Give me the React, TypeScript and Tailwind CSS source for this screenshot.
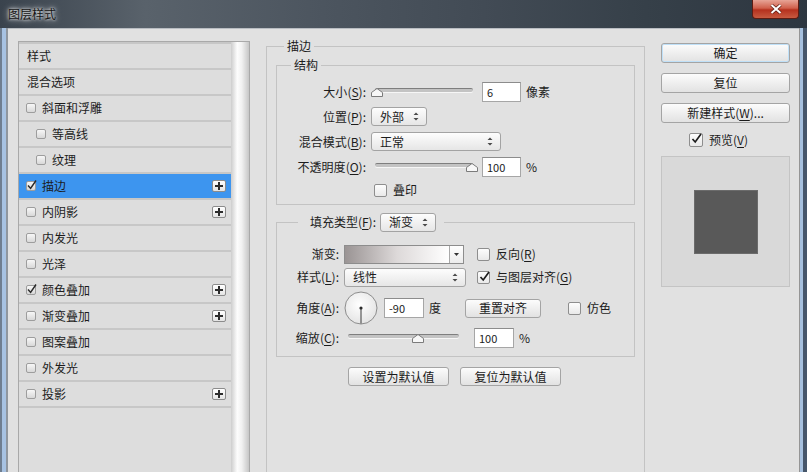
import type { ReactNode } from 'react';

type Item = {
  label: string;
  box?: boolean;
  sub?: boolean;
  checked?: boolean;
  plus?: boolean;
  active?: boolean;
};

const items: Item[] = [
  { label: '样式' },
  { label: '混合选项' },
  { label: '斜面和浮雕', box: true },
  { label: '等高线', box: true, sub: true },
  { label: '纹理', box: true, sub: true },
  { label: '描边', box: true, checked: true, plus: true, active: true },
  { label: '内阴影', box: true, plus: true },
  { label: '内发光', box: true },
  { label: '光泽', box: true },
  { label: '颜色叠加', box: true, checked: true, plus: true },
  { label: '渐变叠加', box: true, plus: true },
  { label: '图案叠加', box: true },
  { label: '外发光', box: true },
  { label: '投影', box: true, plus: true },
];

// label like 大小(S): with the access key underlined
function Key({ text, k, colon = true }: { text: string; k: string; colon?: boolean }) {
  return (
    <>
      {text}(<span className="underline underline-offset-[2px]">{k}</span>){colon ? ':' : ''}
    </>
  );
}

function Tick({ className }: { className: string }) {
  return (
    <svg className={className} width="13" height="13" viewBox="0 0 13 13">
      <path d="M2.5 7 L5.2 10 L11 2" fill="none" stroke="#1e1e1e" strokeWidth="1.7" />
    </svg>
  );
}

function CheckBox({ checked = false }: { checked?: boolean }) {
  return (
    <span className="relative block h-[13px] w-[13px] shrink-0 rounded-[2px] border border-[#8e8e8e] bg-gradient-to-b from-[#fdfdfd] to-[#e9e9e9]">
      {checked && <Tick className="absolute -top-[2px] left-0" />}
    </span>
  );
}

function SmallBox({ checked = false }: { checked?: boolean }) {
  return (
    <span className="relative block h-[10px] w-[10px] shrink-0 rounded-[2px] border border-[#9d9d9d] bg-gradient-to-b from-[#f7f7f7] to-[#d8d8d8]">
      {checked && (
        <svg className="absolute -top-[3px] -left-[1px]" width="12" height="12" viewBox="0 0 12 12">
          <path d="M2 6.5 L4.6 9.4 L10 1.5" fill="none" stroke="#2a2a2a" strokeWidth="1.5" />
        </svg>
      )}
    </span>
  );
}

function Arrows() {
  return (
    <svg width="6" height="9" viewBox="0 0 6 9">
      <path d="M3 0.5 L5.5 3 H0.5 Z M0.5 6 H5.5 L3 8.5 Z" fill="#4a4a4a" />
    </svg>
  );
}

function Select({ value, className }: { value: string; className: string }) {
  return (
    <div
      className={`flex h-[19px] items-center justify-between rounded-[3px] border border-[#a3a3a3] bg-gradient-to-b from-[#fdfdfd] to-[#e6e6e6] pl-[8px] pr-[7px] ${className}`}
    >
      <span>{value}</span>
      <Arrows />
    </div>
  );
}

function Field({ value, className }: { value: string; className: string }) {
  return (
    <div
      className={`flex h-[20px] items-center border border-[#a6a6a6] border-t-[#8c8c8c] bg-white pl-[4px] text-[11px] ${className}`}
    >
      {value}
    </div>
  );
}

function Button({ children, className }: { children: ReactNode; className: string }) {
  return (
    <div
      className={`flex items-center justify-center rounded-[3px] border border-[#a4a4a4] bg-gradient-to-b from-[#fcfcfc] to-[#e2e2e2] text-[#1a1a1a] ${className}`}
    >
      {children}
    </div>
  );
}

function Slider({ pos, className }: { pos: number; className: string }) {
  return (
    <div className={`relative h-[12px] ${className}`}>
      <div className="absolute left-[4px] right-[4px] top-[1px] h-[4px] rounded-full border-t border-[#7e7e7e] bg-[#c3c3c3] shadow-[0_1px_0_#f6f6f6]" />
      <svg
        className="absolute top-[1px]"
        style={{ left: `calc(${pos}% - 6px)` }}
        width="12"
        height="9"
        viewBox="0 0 12 9"
      >
        <path d="M6 0.5 L11.5 4.5 V8.5 H0.5 V4.5 Z" fill="#f7f7f7" stroke="#7b7b7b" />
      </svg>
    </div>
  );
}

function LayerList() {
  return (
    <div className="mt-[3px] flex h-[440px] w-[232px] shrink-0 border border-[#a9a9a9] bg-[#dddddd]">
      <div className="w-[212px] border-t-2 border-[#c7c7c7]">
        {items.map((it) => (
          <div
            key={it.label}
            className={`flex h-[26px] items-center border-b-2 border-[#c7c7c7] ${it.active ? 'bg-[#3d95ef]' : ''} ${it.box ? (it.sub ? 'pl-[17px]' : 'pl-[7px]') : 'pl-[8px]'}`}
          >
            {it.box && <SmallBox checked={it.checked} />}
            <span className={it.box ? 'ml-[6px]' : ''}>{it.label}</span>
            {it.plus && (
              <span className="ml-auto mr-[5px] flex h-[12px] w-[14px] items-center justify-center rounded-[2px] border border-[#8c8c8c] bg-gradient-to-b from-white to-[#e4e4e4]">
                <svg width="8" height="8" viewBox="0 0 8 8">
                  <path d="M4 0 V8 M0 4 H8" stroke="#2c2c2c" strokeWidth="2" />
                </svg>
              </span>
            )}
          </div>
        ))}
      </div>
      <div className="w-[18px] bg-[linear-gradient(to_right,#cdcdcd,#fdfdfd_35%,#f1f1f1_60%,#c6c6c6)]" />
    </div>
  );
}

function StrokePanel() {
  return (
    <fieldset className="ml-[16px] h-[440px] w-[379px] shrink-0 border border-[#c3c3c3]">
      <legend className="ml-[17px] px-[3px] leading-[16px]">描边</legend>
      <div className="px-[9px] pt-[3px]">
        {/* 结构 */}
        <fieldset className="border border-[#c3c3c3]">
          <legend className="ml-[14px] px-[3px] leading-[16px]">结构</legend>
          <div className="pb-[3px] pt-[6px]">
            <div className="flex h-[25px] items-center">
              <span className="w-[89px] text-right">
                <Key text="大小" k="S" />
              </span>
              <Slider pos={6} className="ml-[5px] mt-[3px] w-[106px]" />
              <Field value="6" className="ml-[5px] w-[39px]" />
              <span className="ml-[5px]">像素</span>
            </div>
            <div className="flex h-[25px] items-center">
              <span className="w-[89px] text-right">
                <Key text="位置" k="P" />
              </span>
              <Select value="外部" className="ml-[5px] w-[56px]" />
            </div>
            <div className="flex h-[25px] items-center">
              <span className="w-[89px] text-right">
                <Key text="混合模式" k="B" />
              </span>
              <Select value="正常" className="ml-[5px] w-[130px]" />
            </div>
            <div className="flex h-[25px] items-center">
              <span className="w-[89px] text-right">
                <Key text="不透明度" k="O" />
              </span>
              <Slider pos={95} className="ml-[5px] mt-[3px] w-[106px]" />
              <Field value="100" className="ml-[5px] w-[39px]" />
              <span className="ml-[5px]">%</span>
            </div>
            <div className="flex h-[22px] items-center pl-[97px]">
              <CheckBox />
              <span className="ml-[6px]">叠印</span>
            </div>
          </div>
        </fieldset>

        {/* 填充类型 */}
        <fieldset className="mt-[7px] border border-[#c3c3c3]">
          <legend className="ml-[21px] flex h-[20px] items-center gap-[4px] px-[8px]">
            <span className="w-[70px] text-right">
              <Key text="填充类型" k="F" />
            </span>
            <Select value="渐变" className="w-[56px]" />
          </legend>
          <div className="pb-[8px] pt-[12px]">
            <div className="flex h-[20px] items-center">
              <span className="w-[62px] text-right">渐变:</span>
              <div className="ml-[5px] flex h-[19px] w-[120px] border border-[#8d8d8d]">
                <div className="flex-1 bg-gradient-to-r from-[#9a9494] via-[#ddd9d9] to-white" />
                <div className="flex w-[14px] items-center justify-center border-l border-[#a9a9a9] bg-gradient-to-b from-white to-[#ececec]">
                  <svg width="5" height="3" viewBox="0 0 5 3">
                    <path d="M0 0 H5 L2.5 3 Z" fill="#333" />
                  </svg>
                </div>
              </div>
              <span className="ml-[13px]">
                <CheckBox />
              </span>
              <span className="ml-[6px]">
                <Key text="反向" k="R" colon={false} />
              </span>
            </div>
            <div className="mt-[3px] flex h-[20px] items-center">
              <span className="w-[62px] text-right">
                <Key text="样式" k="L" />
              </span>
              <Select value="线性" className="ml-[5px] w-[122px]" />
              <span className="ml-[11px]">
                <CheckBox checked />
              </span>
              <span className="ml-[6px]">
                与图层对齐(<span className="underline underline-offset-[2px]">G</span>)
              </span>
            </div>
            <div className="mt-[4px] flex h-[34px] items-center">
              <span className="w-[62px] text-right">
                <Key text="角度" k="A" />
              </span>
              <svg className="ml-[5px]" width="34" height="34" viewBox="0 0 34 34">
                <defs>
                  <radialGradient id="dial" cx="45%" cy="40%" r="65%">
                    <stop offset="0" stopColor="#ffffff" />
                    <stop offset="1" stopColor="#e2e2e2" />
                  </radialGradient>
                </defs>
                <circle cx="17" cy="17" r="16" fill="url(#dial)" stroke="#8d8d8d" />
                <line x1="17" y1="17" x2="17" y2="32.5" stroke="#3a3a3a" strokeWidth="1" />
                <circle cx="17" cy="17" r="1.6" fill="#2a2a2a" />
              </svg>
              <Field value="-90" className="ml-[6px] w-[40px]" />
              <span className="ml-[5px]">度</span>
              <Button className="ml-[24px] h-[19px] w-[76px]">重置对齐</Button>
              <span className="ml-[27px]">
                <CheckBox />
              </span>
              <span className="ml-[6px]">仿色</span>
            </div>
            <div className="mt-[3px] flex h-[20px] items-center">
              <span className="w-[62px] text-right">
                <Key text="缩放" k="C" />
              </span>
              <Slider pos={62} className="ml-[5px] mt-[1px] w-[119px]" />
              <Field value="100" className="ml-[11px] w-[40px]" />
              <span className="ml-[5px]">%</span>
            </div>
          </div>
        </fieldset>

        <div className="mt-[10px] flex gap-[11px] pl-[72px]">
          <Button className="h-[19px] w-[101px]">设置为默认值</Button>
          <Button className="h-[19px] w-[101px]">复位为默认值</Button>
        </div>
      </div>
    </fieldset>
  );
}

function RightColumn() {
  return (
    <div className="ml-[16px] mt-[5px] flex w-[129px] shrink-0 flex-col">
      <Button className="h-[20px] border-[#6f93b9] shadow-[inset_0_0_0_1px_#bfe0f8]">确定</Button>
      <Button className="mt-[10px] h-[20px]">复位</Button>
      <Button className="mt-[10px] h-[20px]">
        新建样式(<span className="underline underline-offset-[2px]">W</span>)...
      </Button>
      <div className="mt-[8px] flex h-[18px] items-center pl-[28px]">
        <span className="relative block h-[14px] w-[14px] rounded-[2px] border border-[#8e8e8e] bg-gradient-to-b from-[#fdfdfd] to-[#e9e9e9]">
          <Tick className="absolute -top-[2px] left-0" />
        </span>
        <span className="ml-[6px]">
          <Key text="预览" k="V" colon={false} />
        </span>
      </div>
      <div className="mt-[7px] flex h-[131px] items-center justify-center border border-[#c4c4c4] bg-[#d9d9d9]">
        <div className="h-[64px] w-[64px] border border-[#6b6b6b] bg-[#595959]" />
      </div>
    </div>
  );
}

export default function App() {
  return (
    <div className="flex h-[472px] w-[807px] flex-col overflow-hidden bg-[#e1e1e1] text-[12px] leading-[16px] text-[#1c1c1c] [font-family:'Noto_Sans_CJK_SC','Noto_Sans',sans-serif]">
      {/* title bar */}
      <div className="flex h-[28px] shrink-0 items-start justify-between bg-[linear-gradient(to_right,#3a434d,#59626b_18%,#4c555f_40%,#424b55_60%,#364049_80%,#2d3640)]">
        <span className="ml-[8px] mt-[6px] text-[#141414] [text-shadow:0_0_6px_#ffffff,0_0_3px_#ffffff]">
          图层样式
        </span>
        <div className="mr-[8px] flex h-[19px] w-[47px] items-center justify-center rounded-b-[4px] border border-t-0 border-[#5e1c12] bg-[linear-gradient(to_bottom,#e7a496,#d0604c_45%,#b5311e_55%,#c85a40)]">
          <svg width="12" height="10" viewBox="0 0 12 10">
            <path d="M1.5 1 L10.5 9 M10.5 1 L1.5 9" stroke="#5a1a10" strokeWidth="3.4" />
            <path d="M1.5 1 L10.5 9 M10.5 1 L1.5 9" stroke="#ffffff" strokeWidth="2" />
          </svg>
        </div>
      </div>
      <div className="flex min-h-0 flex-1">
        <div className="w-[8px] shrink-0 bg-[linear-gradient(to_right,#6f7e90_0,#6f7e90_2px,#a7c2e2_2px,#a7c2e2_6px,#8f969e_6px,#8f969e_8px)]" />
        <div className="flex flex-1 items-start overflow-hidden border-t border-[#b9bdc2] pl-[10px] pt-[9px]">
          <LayerList />
          <StrokePanel />
          <RightColumn />
        </div>
        <div className="w-[8px] shrink-0 bg-[linear-gradient(to_right,#959595_0,#959595_1px,#a6c0de_1px,#a6c0de_4px,#46566a_4px,#46566a_8px)]" />
      </div>
    </div>
  );
}
